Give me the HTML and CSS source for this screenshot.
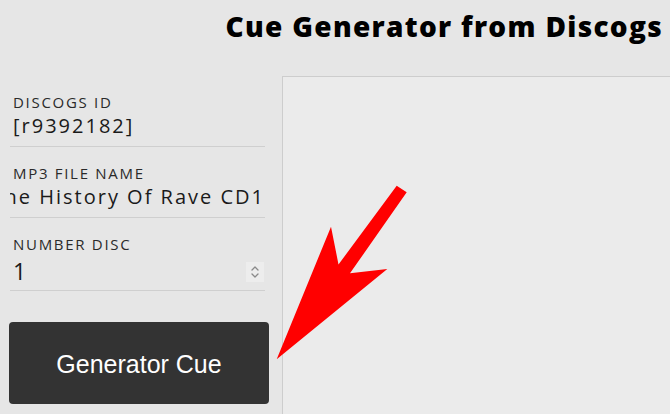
FILE: index.html
```html
<!DOCTYPE html>
<html>
<head>
<meta charset="utf-8">
<link rel="stylesheet" href="styles.css">
</head>
<body>
<header class="top">
  <h1 class="title">Cue Generator from Discogs</h1>
</header>
<main class="layout">
  <section class="form">
    <div class="field">
      <div class="label">DISCOGS ID</div>
      <div class="value">[r9392182]</div>
    </div>
    <div class="field">
      <div class="label">MP3 FILE NAME</div>
      <div class="value value-scroll"><span>The History Of Rave CD1</span></div>
    </div>
    <div class="field field-number">
      <div class="label">NUMBER DISC</div>
      <div class="value value-number">
        <span>1</span>
        <span class="spinner">
          <svg width="10" height="14" viewBox="0 0 10 14"><path d="M2 5 L5 2 L8 5 M2 9 L5 12 L8 9" fill="none" stroke="#8a8a8a" stroke-width="1.3" stroke-linecap="round" stroke-linejoin="round"/></svg>
        </span>
      </div>
    </div>
    <button class="generate">Generator Cue</button>
  </section>
  <section class="output"></section>
</main>
<svg class="arrow" width="670" height="414" viewBox="0 0 670 414">
  <polygon points="396.7,185.7 406.7,192.3 350,273.3 387.3,269 276.7,359.3 331,226.7 338.5,264.5" fill="#ff0000"/>
</svg>
</body>
</html>
```
FILE: styles.css
```css
html, body {
  margin: 0;
  padding: 0;
}
body {
  width: 670px;
  height: 414px;
  overflow: hidden;
  background: #e6e6e6;
  font-family: "Open Sans", "Noto Sans", sans-serif;
  color: #1a1a1a;
  position: relative;
}
.top {
  height: 76px;
  display: flex;
  justify-content: flex-end;
  padding-right: 7px;
  box-sizing: border-box;
}
.title {
  margin: 0;
  padding-top: 10px;
  font-size: 28px;
  line-height: 32px;
  font-weight: 800;
  color: #000;
  letter-spacing: 1.3px;
}
.layout {
  display: grid;
  grid-template-columns: 282px 1fr;
  height: 338px;
}
.form {
  padding-left: 10px;
  display: flex;
  flex-direction: column;
}
.field {
  width: 255px;
  padding-top: 18px;
  padding-bottom: 7px;
  border-bottom: 1px solid #cfcfcf;
}
.label {
  font-size: 15px;
  line-height: 16px;
  color: #2a2a2a;
  padding-left: 3px;
  letter-spacing: 1.7px;
}
.value {
  margin-top: 3px;
  font-size: 20px;
  line-height: 26px;
  color: #1a1a1a;
  padding-left: 3px;
  white-space: nowrap;
  letter-spacing: 2px;
}
.value-scroll {
  display: flex;
  justify-content: flex-end;
  overflow: hidden;
  padding-left: 0;
  letter-spacing: 2px;
}
.field-number {
  padding-bottom: 6px;
}
.value-number {
  margin-top: 6px;
  font-size: 23px;
  display: flex;
  justify-content: space-between;
  align-items: center;
}
.spinner {
  width: 18px;
  height: 20px;
  background: #ededed;
  display: flex;
  align-items: center;
  justify-content: center;
  margin-right: 1px;
  margin-top: 2px;
}
.spinner svg {
  display: block;
}
.generate {
  margin-top: 31px;
  margin-left: -1px;
  width: 260px;
  height: 82px;
  background: #333333;
  color: #ffffff;
  border: none;
  border-radius: 4px;
  font-family: "Liberation Sans", Arial, sans-serif;
  font-size: 25px;
  padding: 0;
  padding-top: 2px;
}
.output {
  background: #ebebeb;
  border-left: 1px solid #cdcdcd;
  border-top: 1px solid #cdcdcd;
}
.arrow {
  position: absolute;
  left: 0;
  top: 0;
  pointer-events: none;
}
```
